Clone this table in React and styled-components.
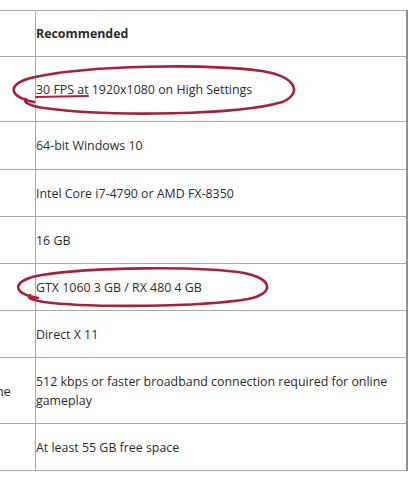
import React from 'react';
import styled, { createGlobalStyle } from 'styled-components';

const GlobalStyle = createGlobalStyle`
  html, body {
    margin: 0;
    padding: 0;
    background: #ffffff;
  }
`;

// Page frame: the screenshot is cropped, so the first column runs off to the left
const Page = styled.div`
  position: relative;
  width: 420px;
  height: 480px;
  overflow: hidden;
  padding-top: 10px;
  box-sizing: border-box;
  font-family: "Open Sans", "Noto Sans", sans-serif;
  font-size: 12.4px;
  color: #2a2a2a;
`;

const Specs = styled.table`
  border-collapse: collapse;
  margin-left: -40px;
  table-layout: fixed;
  width: 448px;
  border-right: 2px solid #8f8f8f;
`;

const Row = styled.tr`
  height: ${(p) => p.$h}px;
`;

const Label = styled.td`
  width: 64px;
  padding: 0 0 0 11px;
  border: 1px solid #a9a9a9;
  border-left: none;
  vertical-align: middle;
  white-space: nowrap;
  overflow: hidden;
  font-size: 13px;
`;

const Value = styled.td`
  padding: 0 10px 0 0;
  border: 1px solid #a9a9a9;
  vertical-align: middle;
  line-height: 19px;
  font-weight: ${(p) => (p.$head ? 700 : 400)};
`;

// Hand drawn red marks laid over the table
const Marks = styled.svg`
  position: absolute;
  left: 0;
  top: 0;
  pointer-events: none;
`;

const rows = [
  { label: '', value: 'Recommended', h: 46, head: true },
  { label: '', value: '30 FPS at 1920x1080 on High Settings', h: 65 },
  { label: '', value: '64-bit Windows 10', h: 48 },
  { label: '', value: 'Intel Core i7-4790 or AMD FX-8350', h: 47 },
  { label: '', value: '16 GB', h: 47 },
  { label: '', value: 'GTX 1060 3 GB / RX 480 4 GB', h: 47 },
  { label: '', value: 'Direct X 11', h: 47 },
  { label: 'Online', value: '512 kbps or faster broadband connection required for online gameplay', h: 66 },
  { label: '', value: 'At least 55 GB free space', h: 47 },
];

export default function App() {
  return (
    <>
      <GlobalStyle />
      <Page>
        <Specs>
          <tbody>
            {rows.map((r, i) => (
              <Row key={i} $h={r.h}>
                <Label>{r.label}</Label>
                <Value $head={r.head}>{r.value}</Value>
              </Row>
            ))}
          </tbody>
        </Specs>

        <Marks width="420" height="480" viewBox="0 0 420 480">
          <g fill="none" stroke="#a3243a" strokeWidth="2.6" strokeLinecap="round" strokeLinejoin="round">
            {/* ellipse round the frame rate */}
            <path d="M34 102 C 6 96, 6 82, 40 76 C 90 66, 200 63, 262 71 C 298 77, 302 94, 282 102 C 240 115, 110 117, 44 108 C 30 106, 22 102, 26 99" />
            <path d="M36 97 L 88 96" strokeWidth="2.2" />
            {/* ellipse round the graphics card */}
            <path d="M38 298 C 10 293, 12 280, 42 275 C 90 267, 200 266, 244 273 C 274 279, 274 294, 248 299 C 200 307, 90 308, 44 302 C 32 300, 26 298, 30 295" />
          </g>
        </Marks>
      </Page>
    </>
  );
}
